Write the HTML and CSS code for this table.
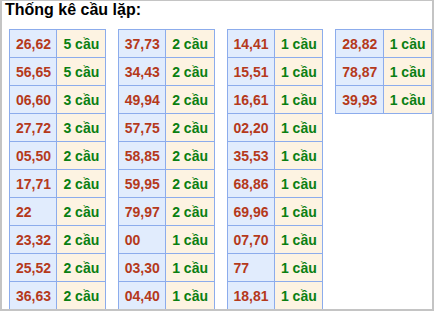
FILE: index.html
```html
<!DOCTYPE html>
<html>
<head>
<meta charset="utf-8">
<link rel="stylesheet" href="styles.css">
</head>
<body>
<div class="box">
  <div class="title">Thống kê cầu lặp:</div>
  <div class="tables">
    <table class="cau">
      <tr><td class="num">26,62</td><td class="cnt">5 cầu</td></tr>
      <tr><td class="num">56,65</td><td class="cnt">5 cầu</td></tr>
      <tr><td class="num">06,60</td><td class="cnt">3 cầu</td></tr>
      <tr><td class="num">27,72</td><td class="cnt">3 cầu</td></tr>
      <tr><td class="num">05,50</td><td class="cnt">2 cầu</td></tr>
      <tr><td class="num">17,71</td><td class="cnt">2 cầu</td></tr>
      <tr><td class="num">22</td><td class="cnt">2 cầu</td></tr>
      <tr><td class="num">23,32</td><td class="cnt">2 cầu</td></tr>
      <tr><td class="num">25,52</td><td class="cnt">2 cầu</td></tr>
      <tr><td class="num">36,63</td><td class="cnt">2 cầu</td></tr>
    </table>
    <table class="cau">
      <tr><td class="num">37,73</td><td class="cnt">2 cầu</td></tr>
      <tr><td class="num">34,43</td><td class="cnt">2 cầu</td></tr>
      <tr><td class="num">49,94</td><td class="cnt">2 cầu</td></tr>
      <tr><td class="num">57,75</td><td class="cnt">2 cầu</td></tr>
      <tr><td class="num">58,85</td><td class="cnt">2 cầu</td></tr>
      <tr><td class="num">59,95</td><td class="cnt">2 cầu</td></tr>
      <tr><td class="num">79,97</td><td class="cnt">2 cầu</td></tr>
      <tr><td class="num">00</td><td class="cnt">1 cầu</td></tr>
      <tr><td class="num">03,30</td><td class="cnt">1 cầu</td></tr>
      <tr><td class="num">04,40</td><td class="cnt">1 cầu</td></tr>
    </table>
    <table class="cau">
      <tr><td class="num">14,41</td><td class="cnt">1 cầu</td></tr>
      <tr><td class="num">15,51</td><td class="cnt">1 cầu</td></tr>
      <tr><td class="num">16,61</td><td class="cnt">1 cầu</td></tr>
      <tr><td class="num">02,20</td><td class="cnt">1 cầu</td></tr>
      <tr><td class="num">35,53</td><td class="cnt">1 cầu</td></tr>
      <tr><td class="num">68,86</td><td class="cnt">1 cầu</td></tr>
      <tr><td class="num">69,96</td><td class="cnt">1 cầu</td></tr>
      <tr><td class="num">07,70</td><td class="cnt">1 cầu</td></tr>
      <tr><td class="num">77</td><td class="cnt">1 cầu</td></tr>
      <tr><td class="num">18,81</td><td class="cnt">1 cầu</td></tr>
    </table>
    <table class="cau">
      <tr><td class="num">28,82</td><td class="cnt">1 cầu</td></tr>
      <tr><td class="num">78,87</td><td class="cnt">1 cầu</td></tr>
      <tr><td class="num">39,93</td><td class="cnt">1 cầu</td></tr>
    </table>
  </div>
</div>
</body>
</html>
```
FILE: styles.css
```css
html, body {
  margin: 0;
  padding: 0;
  background: #ffffff;
}
body {
  font-family: "Liberation Sans", Arial, sans-serif;
  overflow: hidden;
}
.box {
  width: 434px;
  height: 311px;
  box-sizing: border-box;
  border: 2px solid #c4c4c4;
  border-top-width: 1px;
  padding: 0 0 0 7px;
  overflow: hidden;
}
.title {
  font-size: 16px;
  font-weight: bold;
  line-height: 18px;
  color: #000;
  margin-left: -4px;
  height: 18px;
  margin-bottom: 10px;
}
.tables {
  display: flex;
  align-items: flex-start;
  gap: 12px;
}
.cau {
  flex: 1 1 0;
  border-collapse: collapse;
  table-layout: fixed;
}
.cau td {
  border: 1px solid #8cacec;
  height: 27px;
  padding: 0 0 0 6px;
  font-size: 14px;
  font-weight: bold;
  white-space: nowrap;
  vertical-align: middle;
}
.num {
  background: #e1ecfd;
  color: #b5391b;
}
.cnt {
  background: #fdf3e2;
  color: #0a7f12;
}
```
